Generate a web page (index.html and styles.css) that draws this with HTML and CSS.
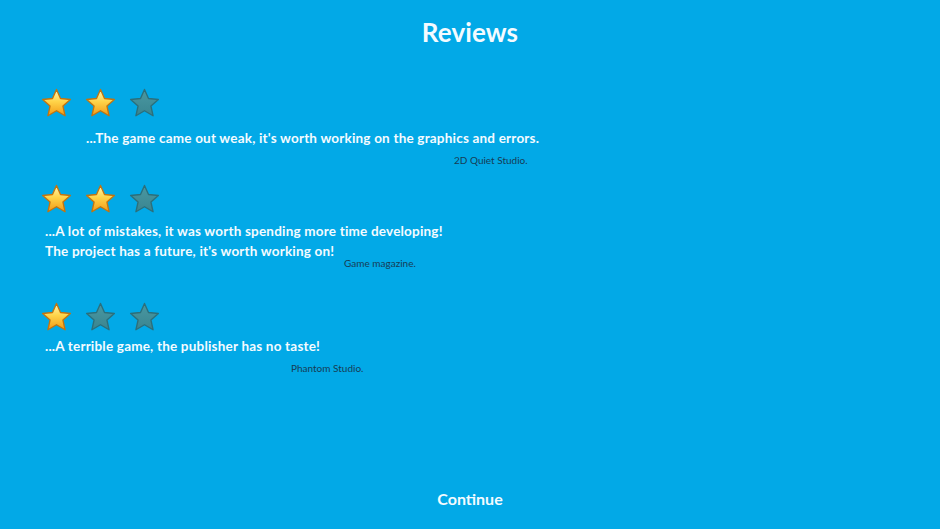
FILE: index.html
```html
<!DOCTYPE html>
<html lang="en">
    <head>
        <meta charset="UTF-8" />
        <meta name="viewport" content="width=device-width, initial-scale=1.0" />
        <title>Reviews</title>
        <link rel="stylesheet" href="styles.css">
    </head>
    <body>
        <svg class="defs" width="0" height="0">
            <defs>
                <linearGradient id="goldFill" x1="0" y1="0" x2="0" y2="1">
                    <stop offset="0" stop-color="#fff6b8" />
                    <stop offset="0.45" stop-color="#ffd54a" />
                    <stop offset="1" stop-color="#f39a16" />
                </linearGradient>
                <linearGradient id="dullFill" x1="0" y1="0" x2="0" y2="1">
                    <stop offset="0" stop-color="#4a98a2" />
                    <stop offset="1" stop-color="#3a8590" />
                </linearGradient>
                <symbol id="star" viewBox="-1 -1 34 34">
                    <path d="M16 1.5 L20.12 10.84 L30.27 11.87 L22.66 18.66 L24.82 28.64 L16 23.5 L7.18 28.64 L9.34 18.66 L1.73 11.87 L11.88 10.84 Z" />
                </symbol>
            </defs>
        </svg>

        <h1 class="title">Reviews</h1>

        <div class="reviews">
            <div class="review review-one">
                <div class="stars">
                    <svg class="star on"><use href="#star" /></svg>
                    <svg class="star on"><use href="#star" /></svg>
                    <svg class="star off"><use href="#star" /></svg>
                </div>
                <p class="quote">...The game came out weak, it's worth working on the graphics and errors.</p>
                <p class="author">2D Quiet Studio.</p>
            </div>

            <div class="review review-two">
                <div class="stars">
                    <svg class="star on"><use href="#star" /></svg>
                    <svg class="star on"><use href="#star" /></svg>
                    <svg class="star off"><use href="#star" /></svg>
                </div>
                <p class="quote">...A lot of mistakes, it was worth spending more time developing!<br />The project has a future, it's worth working on!</p>
                <p class="author">Game magazine.</p>
            </div>

            <div class="review review-three">
                <div class="stars">
                    <svg class="star on"><use href="#star" /></svg>
                    <svg class="star off"><use href="#star" /></svg>
                    <svg class="star off"><use href="#star" /></svg>
                </div>
                <p class="quote">...A terrible game, the publisher has no taste!</p>
                <p class="author">Phantom Studio.</p>
            </div>
        </div>

        <button class="continue">Continue</button>
    </body>
</html>
```

FILE: styles.css
```css
body {
    font-family: "Lato", "Open Sans", sans-serif;
    margin: 0;
    padding: 0;
    width: 940px;
    height: 529px;
    overflow: hidden;
    background-color: #02a9e7;
    color: #f4fbff;
    display: flex;
    flex-direction: column;
}

.defs {
    position: absolute;
    width: 0;
    height: 0;
}

.title {
    margin: 0;
    padding-top: 17px;
    font-size: 26px;
    line-height: 30px;
    font-weight: 700;
    letter-spacing: 0.1px;
    text-align: center;
    color: #f4fbff;
}

.reviews {
    flex: 1;
    padding-left: 40px;
}

.review p {
    margin: 0;
}

.stars {
    display: flex;
    gap: 11px;
    height: 34px;
    align-items: center;
}

.star {
    width: 33px;
    height: 33px;
}

.star.on {
    fill: url(#goldFill);
    stroke: #c27410;
    stroke-width: 1.4;
    stroke-linejoin: round;
}

.star.off {
    fill: url(#dullFill);
    stroke: #2c6f7b;
    stroke-width: 1.4;
    stroke-linejoin: round;
}

.quote {
    font-size: 13.5px;
    line-height: 20px;
    font-weight: 700;
    letter-spacing: 0.2px;
}

.author {
    font-size: 10px;
    line-height: 14px;
    color: #173c55;
}

.review-one {
    margin-top: 39px;
}

.review-one .quote {
    margin-left: 46px;
    margin-top: 8px;
}

.review-one .author {
    margin-left: 414px;
    margin-top: 5px;
}

.review-two {
    margin-top: 15px;
}

.review-two .quote {
    margin-left: 5px;
    margin-top: 5px;
}

.review-two .author {
    margin-left: 304px;
    margin-top: -5px;
}

.review-three {
    margin-top: 30px;
}

.review-three .quote {
    margin-left: 5px;
    margin-top: 2px;
}

.review-three .author {
    margin-left: 251px;
    margin-top: 5px;
}

.continue {
    align-self: center;
    margin-bottom: 20px;
    background: none;
    border: none;
    padding: 0;
    font-family: inherit;
    font-size: 16px;
    line-height: 20px;
    font-weight: 700;
    color: #f4fbff;
    cursor: pointer;
}
```
